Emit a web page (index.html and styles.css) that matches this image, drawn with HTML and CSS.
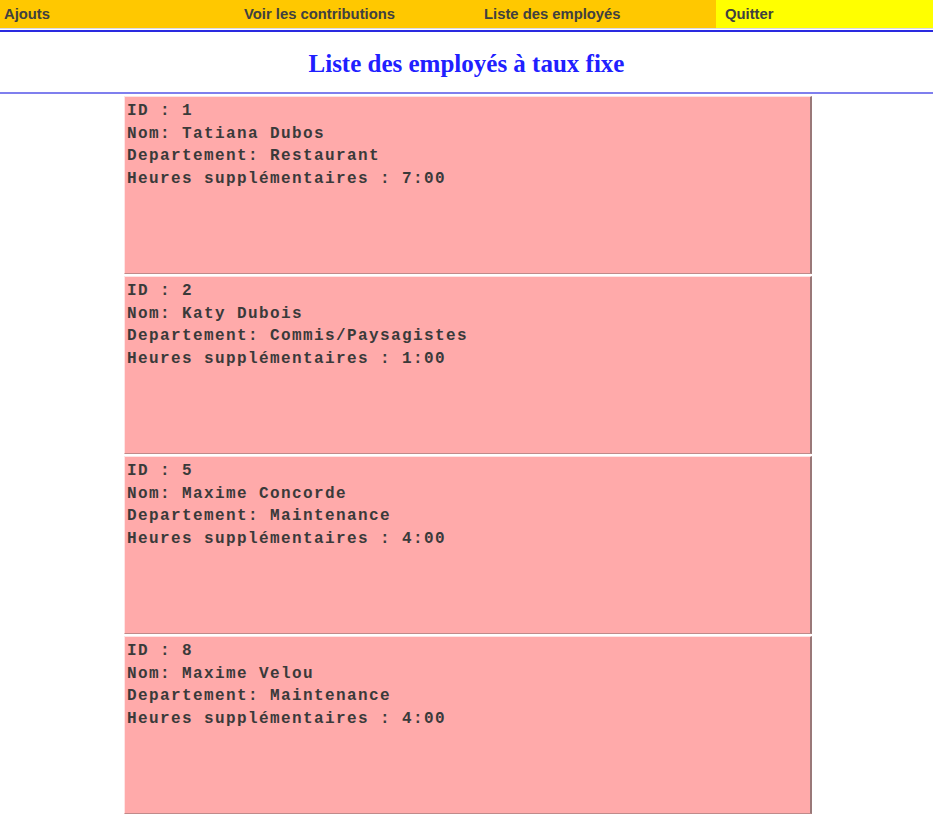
FILE: index.html
```html
<!DOCTYPE html>
<html lang="fr">
<head>
<meta charset="utf-8">
<title>Liste des employés à taux fixe</title>
<link rel="stylesheet" href="styles.css">
</head>
<body>
<nav class="menu">
  <a class="menu-item" href="#">Ajouts</a>
  <a class="menu-item" href="#">Voir les contributions</a>
  <a class="menu-item" href="#">Liste des employés</a>
  <a class="menu-item menu-quit" href="#">Quitter</a>
</nav>
<div class="rule-top"></div>
<h2 class="title">Liste des employés à taux fixe</h2>
<div class="rule-bottom"></div>
<main class="list">
  <div class="card">ID : 1
Nom: Tatiana Dubos
Departement: Restaurant
Heures supplémentaires : 7:00</div>
  <div class="card">ID : 2
Nom: Katy Dubois
Departement: Commis/Paysagistes
Heures supplémentaires : 1:00</div>
  <div class="card">ID : 5
Nom: Maxime Concorde
Departement: Maintenance
Heures supplémentaires : 4:00</div>
  <div class="card">ID : 8
Nom: Maxime Velou
Departement: Maintenance
Heures supplémentaires : 4:00</div>
</main>
</body>
</html>
```
FILE: styles.css
```css
html, body {
  margin: 0;
  padding: 0;
  background: #ffffff;
}

.menu {
  display: grid;
  grid-template-columns: 240px 240px 236px 1fr;
  height: 28px;
  background: #ffc800;
  font-family: "Liberation Sans", Arial, sans-serif;
  font-weight: bold;
  font-size: 14.8px;
}

.menu-item {
  display: flex;
  align-items: center;
  padding-left: 4px;
  padding-bottom: 1px;
  color: #404040;
  text-decoration: none;
}

.menu-quit {
  background: #ffff00;
  padding-left: 9px;
}

.rule-top {
  height: 1px;
  border-top: 1px solid #d8d8e8;
  border-bottom: 2px solid #2a2ae0;
}

.title {
  box-sizing: border-box;
  margin: 0;
  height: 60px;
  padding-top: 4px;
  display: flex;
  align-items: center;
  justify-content: center;
  font-family: "Liberation Serif", "Times New Roman", serif;
  font-weight: bold;
  font-size: 25px;
  color: #2020ff;
}

.rule-bottom {
  height: 0;
  border-top: 2px solid #7f7fee;
}

.list {
  width: 688px;
  margin: 2px 0 0 124px;
  display: flex;
  flex-direction: column;
  gap: 2px;
}

.card {
  box-sizing: border-box;
  height: 178px;
  padding: 3px 2px;
  background: #ffaaaa;
  border-top: 1px solid #ffe4e4;
  border-left: 1px solid #ffe4e4;
  border-right: 2px solid #9a7878;
  border-bottom: 1px solid #c08a8a;
  white-space: pre;
  font-family: "Liberation Mono", "Courier New", monospace;
  font-weight: bold;
  font-size: 16px;
  letter-spacing: 1.4px;
  line-height: 22.7px;
  color: #3a3a3a;
}
```
